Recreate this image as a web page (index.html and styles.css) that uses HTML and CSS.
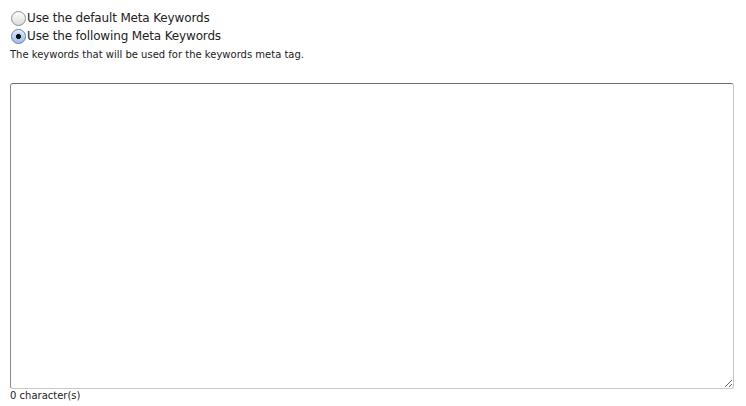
FILE: index.html
```html
<!DOCTYPE html>
<html lang="en">
<head>
  <meta charset="UTF-8" />
  <title>Meta Keywords</title>
  <link rel="stylesheet" href="styles.css">
</head>
<body>
  <div class="field">
    <label class="option">
      <input type="radio" name="metaKeywords" value="default">
      <span>Use the default Meta Keywords</span>
    </label>
    <label class="option">
      <input type="radio" name="metaKeywords" value="custom" checked>
      <span>Use the following Meta Keywords</span>
    </label>
    <p class="hint">The keywords that will be used for the keywords meta tag.</p>
    <textarea id="keywords"></textarea>
    <div class="counter"><span id="count">0</span> character(s)</div>
  </div>

  <script>
    const keywords = document.getElementById('keywords');
    keywords.oninput = () => {
      document.getElementById('count').innerText = keywords.value.length;
    };
  </script>
</body>
</html>
```

FILE: styles.css
```css
* {
  box-sizing: border-box;
}
body {
  margin: 0;
  padding: 9px 12px 0 10px;
  font-family: 'DejaVu Sans', 'Liberation Sans', sans-serif;
  color: #000;
  background: #fff;
}
.field {
  display: flex;
  flex-direction: column;
}
.option {
  display: flex;
  align-items: center;
  height: 18px;
  font-size: 12px;
  letter-spacing: -0.15px;
  color: #222;
}
.option input {
  appearance: none;
  margin: 0 1px 0 1px;
  width: 15px;
  height: 15px;
  border-radius: 50%;
  border: 1px solid #8c8c8c;
  background: linear-gradient(#fdfdfd, #dcdcdc);
  box-shadow: inset 0 1px 1px rgba(255,255,255,0.8);
}
.option input:checked {
  border-color: #5a7fae;
  background: radial-gradient(circle, #111 0 2.3px, transparent 2.8px),
    linear-gradient(#d6e6f7, #9fc1e6);
}
.hint {
  margin: 4px 0 0;
  font-size: 10px;
  color: #222;
}
textarea {
  margin-top: 23px;
  width: 724px;
  height: 306px;
  border: 1px solid #c8c8c8;
  border-top-color: #6e6e6e;
  border-left-color: #8a8a8a;
  border-radius: 3px;
  resize: vertical;
}
.counter {
  margin-top: 1px;
  font-size: 10px;
  color: #222;
}
```
